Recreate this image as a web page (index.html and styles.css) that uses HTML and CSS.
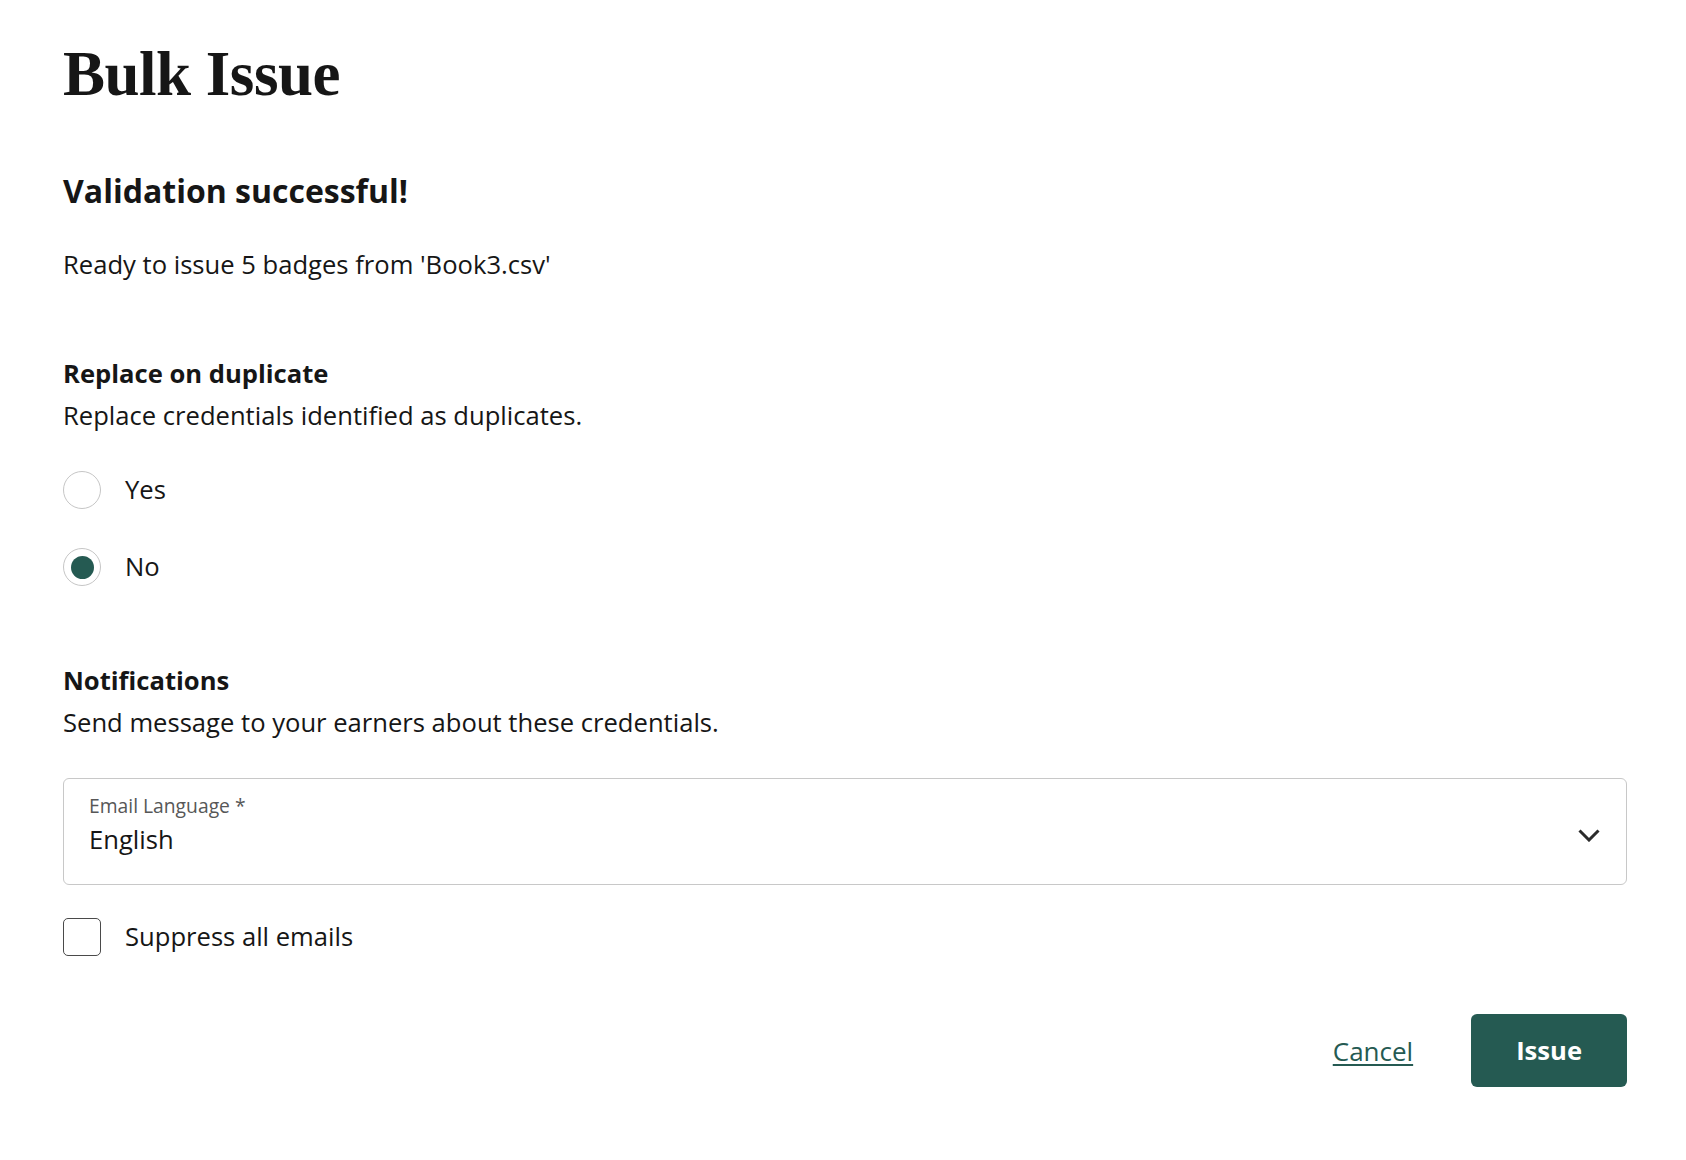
FILE: index.html
```html
<!DOCTYPE html>
<html>
<head>
    <title>Bulk Issue</title>
    <link rel="stylesheet" href="styles.css">
</head>
<body>

    <div class="page">
        <h1 class="page-title">Bulk Issue</h1>

        <h2 class="result-title">Validation successful!</h2>
        <p class="result-text">Ready to issue 5 badges from 'Book3.csv'</p>

        <div class="section section-replace">
            <h3 class="section-title">Replace on duplicate</h3>
            <p class="section-desc">Replace credentials identified as duplicates.</p>

            <div class="radio-group">
                <label class="radio-row">
                    <input type="radio" name="replace" value="yes">
                    <span>Yes</span>
                </label>
                <label class="radio-row">
                    <input type="radio" name="replace" value="no" checked>
                    <span>No</span>
                </label>
            </div>
        </div>

        <div class="section section-notify">
            <h3 class="section-title">Notifications</h3>
            <p class="section-desc">Send message to your earners about these credentials.</p>

            <div class="select-box">
                <div class="select-text">
                    <span class="select-label">Email Language *</span>
                    <span class="select-value">English</span>
                </div>
                <svg class="chevron" width="22" height="13" viewBox="0 0 22 13">
                    <polyline points="1.5,1.5 11,11 20.5,1.5" fill="none" stroke="#2b2b2b" stroke-width="3"/>
                </svg>
            </div>

            <label class="check-row">
                <input type="checkbox">
                <span>Suppress all emails</span>
            </label>
        </div>

        <div class="actions">
            <a href="#" class="cancel-link">Cancel</a>
            <button class="issue-btn">Issue</button>
        </div>
    </div>

</body>
</html>
```

FILE: styles.css
```css
body {
    margin: 0;
    font-family: "Open Sans", "Noto Sans", sans-serif;
    color: #161616;
    background: #fff;
}

.page {
    padding: 38px 59px 40px 63px;
}

.page-title {
    font-family: "Liberation Serif", serif;
    font-weight: 700;
    font-size: 63px;
    line-height: 72px;
    letter-spacing: -0.5px;
    margin: 0;
}

.result-title {
    font-size: 32px;
    line-height: 40px;
    font-weight: 700;
    margin: 61px 0 0;
}

.result-text {
    font-size: 25.6px;
    line-height: 36px;
    margin: 36px 0 0;
}

.section-replace {
    margin-top: 73px;
}

.section-notify {
    margin-top: 77px;
}

.section-title {
    font-size: 25.6px;
    line-height: 36px;
    font-weight: 700;
    margin: 0;
}

.section-desc {
    font-size: 25.6px;
    line-height: 36px;
    margin: 6px 0 0;
}

.radio-group {
    display: flex;
    flex-direction: column;
    gap: 39px;
    margin-top: 37px;
}

.radio-row, .check-row {
    display: flex;
    align-items: center;
    gap: 24px;
    font-size: 25.6px;
    line-height: 38px;
    cursor: pointer;
}

.radio-row input {
    appearance: none;
    margin: 0;
    width: 38px;
    height: 38px;
    border: 1px solid #c6c6c6;
    border-radius: 50%;
    display: flex;
    align-items: center;
    justify-content: center;
}

.radio-row input:checked::after {
    content: "";
    width: 23px;
    height: 23px;
    border-radius: 50%;
    background: #255a52;
}

.select-box {
    margin-top: 37px;
    height: 107px;
    box-sizing: border-box;
    border: 1px solid #c8c8c8;
    border-radius: 6px;
    padding: 15px 26px 0 25px;
    display: flex;
    justify-content: space-between;
}

.select-text {
    display: flex;
    flex-direction: column;
    gap: 6px;
}

.select-label {
    font-size: 19.3px;
    line-height: 24px;
    color: #575757;
}

.select-value {
    font-size: 25.6px;
    line-height: 32px;
}

.chevron {
    margin-top: 35px;
}

.check-row {
    margin-top: 33px;
}

.check-row input {
    appearance: none;
    margin: 0;
    width: 38px;
    height: 38px;
    border: 1px solid #4a4a4a;
    border-radius: 5px;
}

.actions {
    display: flex;
    justify-content: flex-end;
    align-items: center;
    gap: 58px;
    margin-top: 58px;
}

.cancel-link {
    font-size: 26px;
    color: #255a52;
    text-decoration: underline;
    text-decoration-thickness: 2px;
    text-underline-offset: 3px;
}

.issue-btn {
    font-family: "Open Sans", sans-serif;
    font-size: 25.6px;
    font-weight: 700;
    color: #fff;
    background: #255a52;
    border: none;
    border-radius: 6px;
    height: 73px;
    padding: 0 45px;
    cursor: pointer;
}
```
